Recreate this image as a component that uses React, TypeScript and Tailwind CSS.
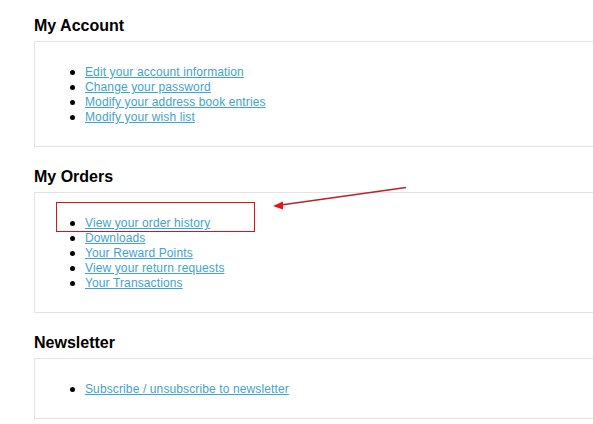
import React from "react";

type Section = { title: string; links: string[] };

const sections: Section[] = [
  {
    title: "My Account",
    links: [
      "Edit your account information",
      "Change your password",
      "Modify your address book entries",
      "Modify your wish list",
    ],
  },
  {
    title: "My Orders",
    links: [
      "View your order history",
      "Downloads",
      "Your Reward Points",
      "View your return requests",
      "Your Transactions",
    ],
  },
  {
    title: "Newsletter",
    links: ["Subscribe / unsubscribe to newsletter"],
  },
];

export default function App() {
  return (
    <div
      className="relative w-[593px] h-[424px] overflow-hidden bg-white"
      style={{ fontFamily: '"Liberation Sans", Arial, sans-serif' }}
    >
      <div className="pl-[34px] pt-[16px] flex flex-col gap-[20px]">
        {sections.map((s) => (
          <div key={s.title} className="flex flex-col">
            <h2 className="text-[16px] leading-[20px] font-bold text-black mb-[5px]">
              {s.title}
            </h2>
            <div className="w-[620px] border border-[#e3e3e3] pt-[23px] pb-[21px] pl-[50px]">
              <ul className="flex flex-col">
                {s.links.map((l) => (
                  <li key={l} className="relative text-[12px] leading-[15px] tracking-[0.12px]">
                    <span className="absolute left-[-15px] top-[5px] w-[5px] h-[5px] rounded-full bg-black" />
                    <a href="#" className="text-[#3fa3cc] underline underline-offset-[1px]">
                      {l}
                    </a>
                  </li>
                ))}
              </ul>
            </div>
          </div>
        ))}
      </div>

      {/* annotation: red box */}
      <div className="absolute left-[56px] top-[202px] w-[199px] h-[30px] border border-[#d41515]" />

      {/* annotation: arrow */}
      <svg
        className="absolute left-0 top-0 pointer-events-none"
        width="593"
        height="424"
        viewBox="0 0 593 424"
      >
        <line x1="406" y1="187.5" x2="281" y2="205" stroke="#b8232a" strokeWidth="1.3" />
        <polygon points="273,206 283,201.5 283,209.5" fill="#e8101a" />
      </svg>
    </div>
  );
}
